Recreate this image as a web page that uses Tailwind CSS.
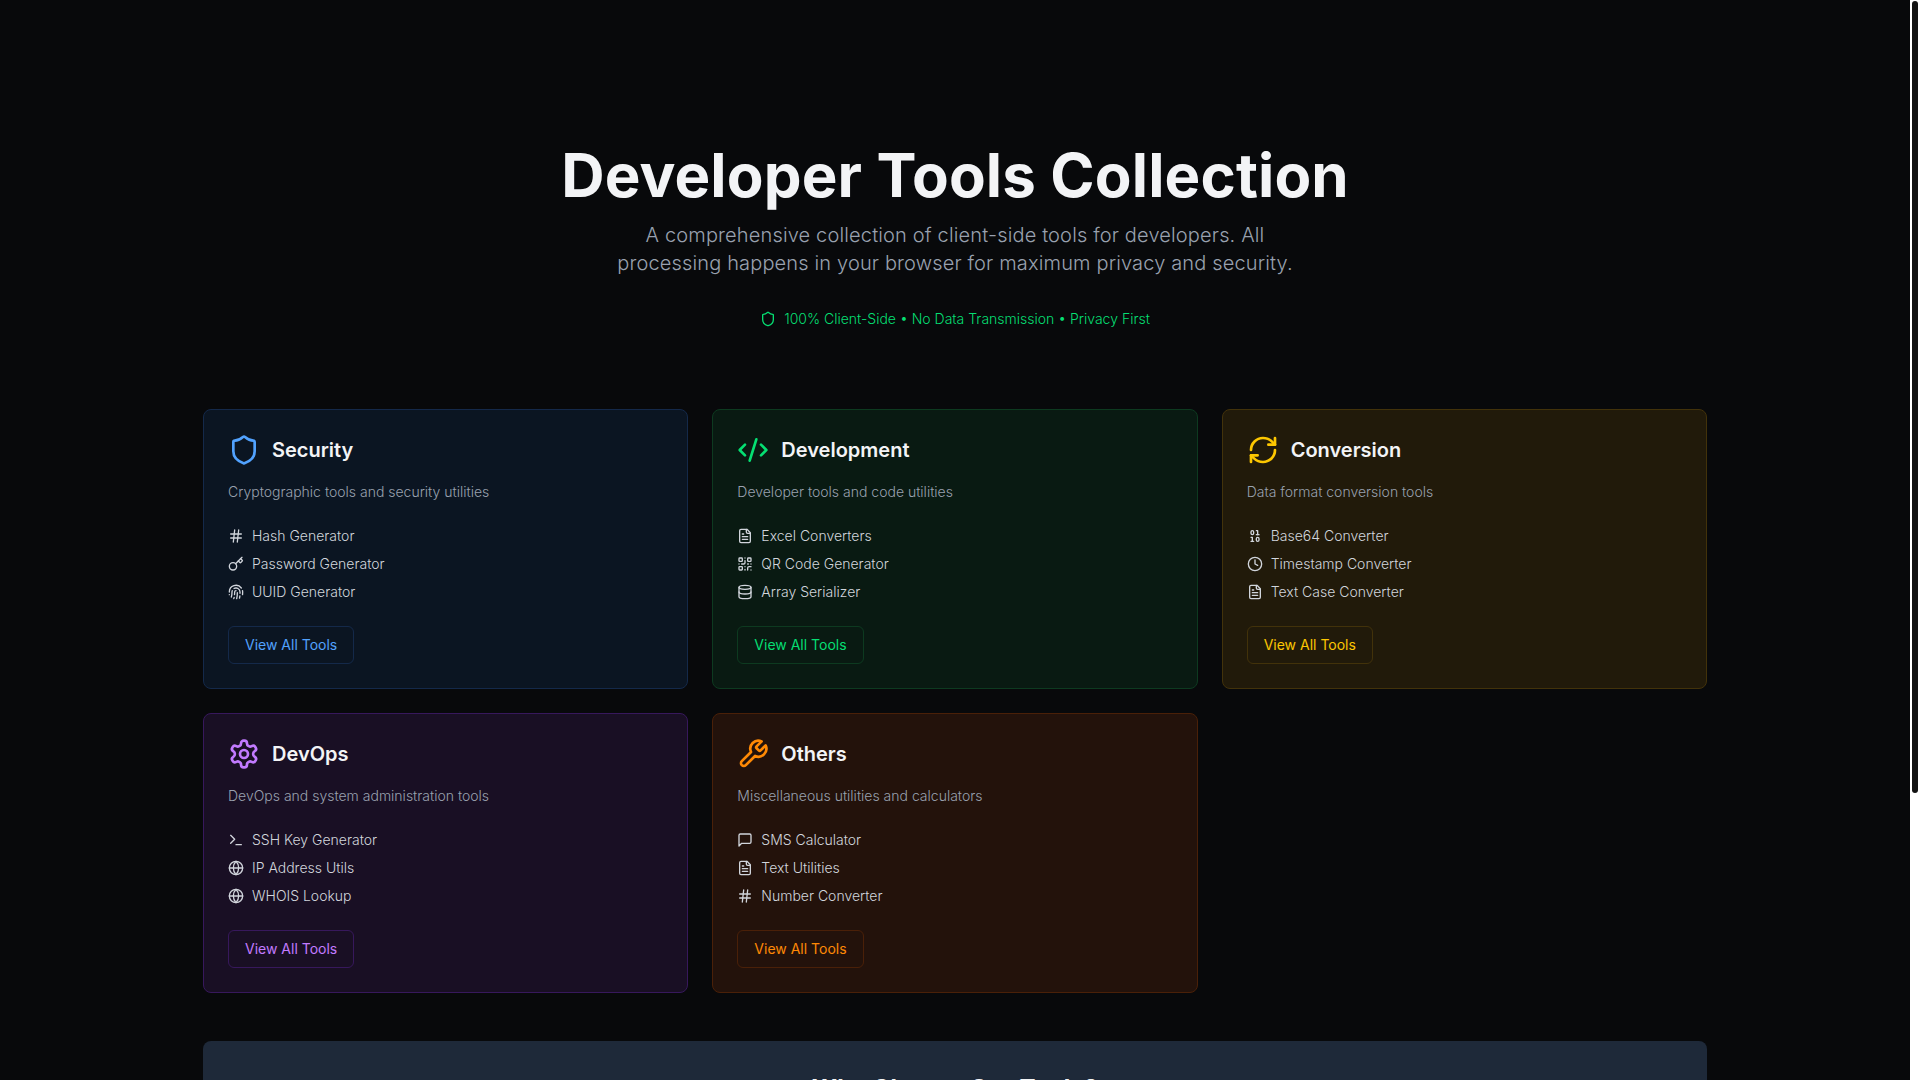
<!DOCTYPE html>
<html lang="en">
<head>
    <meta charset="UTF-8">
    <meta name="viewport" content="width=device-width, initial-scale=1.0">
    <title>Developer Tools Collection</title>
    <script src="https://cdn.jsdelivr.net/npm/@tailwindcss/browser@4"></script>
</head>
<body class="bg-[#08090b] font-['Inter',sans-serif] text-gray-100">
    <!-- Icon sprites -->
    <svg class="hidden" xmlns="http://www.w3.org/2000/svg">
        <symbol id="i-shield" viewBox="0 0 24 24"><path d="M20 13c0 5-3.5 7.5-7.66 8.95a1 1 0 0 1-.67-.01C7.5 20.5 4 18 4 13V6a1 1 0 0 1 1-1c2 0 4.5-1.2 6.24-2.72a1.17 1.17 0 0 1 1.52 0C14.51 3.81 17 5 19 5a1 1 0 0 1 1 1z"/></symbol>
        <symbol id="i-code" viewBox="0 0 24 24"><path d="m18 16 4-4-4-4"/><path d="m6 8-4 4 4 4"/><path d="m14.5 4-5 16"/></symbol>
        <symbol id="i-refresh" viewBox="0 0 24 24"><path d="M3 12a9 9 0 0 1 9-9 9.75 9.75 0 0 1 6.74 2.74L21 8"/><path d="M21 3v5h-5"/><path d="M21 12a9 9 0 0 1-9 9 9.75 9.75 0 0 1-6.74-2.74L3 16"/><path d="M8 16H3v5"/></symbol>
        <symbol id="i-settings" viewBox="0 0 24 24"><path d="M12.22 2h-.44a2 2 0 0 0-2 2v.18a2 2 0 0 1-1 1.73l-.43.25a2 2 0 0 1-2 0l-.15-.08a2 2 0 0 0-2.73.73l-.22.38a2 2 0 0 0 .73 2.73l.15.1a2 2 0 0 1 1 1.72v.51a2 2 0 0 1-1 1.74l-.15.09a2 2 0 0 0-.73 2.73l.22.38a2 2 0 0 0 2.73.73l.15-.08a2 2 0 0 1 2 0l.43.25a2 2 0 0 1 1 1.73V20a2 2 0 0 0 2 2h.44a2 2 0 0 0 2-2v-.18a2 2 0 0 1 1-1.73l.43-.25a2 2 0 0 1 2 0l.15.08a2 2 0 0 0 2.73-.73l.22-.39a2 2 0 0 0-.73-2.73l-.15-.08a2 2 0 0 1-1-1.74v-.5a2 2 0 0 1 1-1.74l.15-.09a2 2 0 0 0 .73-2.73l-.22-.38a2 2 0 0 0-2.73-.73l-.15.08a2 2 0 0 1-2 0l-.43-.25a2 2 0 0 1-1-1.73V4a2 2 0 0 0-2-2z"/><circle cx="12" cy="12" r="3"/></symbol>
        <symbol id="i-wrench" viewBox="0 0 24 24"><path d="M14.7 6.3a1 1 0 0 0 0 1.4l1.6 1.6a1 1 0 0 0 1.4 0l3.77-3.77a6 6 0 0 1-7.94 7.94l-6.91 6.91a2.12 2.12 0 0 1-3-3l6.91-6.91a6 6 0 0 1 7.94-7.94l-3.76 3.76z"/></symbol>
        <symbol id="i-hash" viewBox="0 0 24 24"><line x1="4" x2="20" y1="9" y2="9"/><line x1="4" x2="20" y1="15" y2="15"/><line x1="10" x2="8" y1="3" y2="21"/><line x1="16" x2="14" y1="3" y2="21"/></symbol>
        <symbol id="i-key" viewBox="0 0 24 24"><path d="m15.5 7.5 2.3 2.3a1 1 0 0 0 1.4 0l2.1-2.1a1 1 0 0 0 0-1.4L19 4"/><path d="m21 2-9.6 9.6"/><circle cx="7.5" cy="15.5" r="5.5"/></symbol>
        <symbol id="i-fingerprint" viewBox="0 0 24 24"><path d="M12 10a2 2 0 0 0-2 2c0 1.02-.1 2.51-.26 4"/><path d="M14 13.12c0 2.38 0 6.38-1 8.88"/><path d="M17.29 21.02c.12-.6.43-2.3.5-3.02"/><path d="M2 12a10 10 0 0 1 18-6"/><path d="M2 16h.01"/><path d="M21.8 16c.2-2 .131-5.354 0-6"/><path d="M5 19.5C5.5 18 6 15 6 12a6 6 0 0 1 .34-2"/><path d="M8.65 22c.21-.66.45-1.32.57-2"/><path d="M9 6.8a6 6 0 0 1 9 5.2v2"/></symbol>
        <symbol id="i-file" viewBox="0 0 24 24"><path d="M15 2H6a2 2 0 0 0-2 2v16a2 2 0 0 0 2 2h12a2 2 0 0 0 2-2V7Z"/><path d="M14 2v4a2 2 0 0 0 2 2h4"/><path d="M10 9H8"/><path d="M16 13H8"/><path d="M16 17H8"/></symbol>
        <symbol id="i-qr" viewBox="0 0 24 24"><rect width="5" height="5" x="3" y="3" rx="1"/><rect width="5" height="5" x="16" y="3" rx="1"/><rect width="5" height="5" x="3" y="16" rx="1"/><path d="M21 16h-3a2 2 0 0 0-2 2v3"/><path d="M21 21v.01"/><path d="M12 7v3a2 2 0 0 1-2 2H7"/><path d="M3 12h.01"/><path d="M12 3h.01"/><path d="M12 16v.01"/><path d="M16 12h1"/><path d="M21 12v.01"/><path d="M12 21v-1"/></symbol>
        <symbol id="i-database" viewBox="0 0 24 24"><ellipse cx="12" cy="5" rx="9" ry="3"/><path d="M3 5V19A9 3 0 0 0 21 19V5"/><path d="M3 12A9 3 0 0 0 21 12"/></symbol>
        <symbol id="i-binary" viewBox="0 0 24 24"><rect x="14" y="14" width="4" height="6" rx="2"/><rect x="6" y="4" width="4" height="6" rx="2"/><path d="M6 20h4"/><path d="M14 10h4"/><path d="M6 14h2v6"/><path d="M14 4h2v6"/></symbol>
        <symbol id="i-clock" viewBox="0 0 24 24"><circle cx="12" cy="12" r="10"/><polyline points="12 6 12 12 16 14"/></symbol>
        <symbol id="i-terminal" viewBox="0 0 24 24"><polyline points="4 17 10 11 4 5"/><line x1="12" x2="20" y1="19" y2="19"/></symbol>
        <symbol id="i-globe" viewBox="0 0 24 24"><circle cx="12" cy="12" r="10"/><path d="M12 2a14.5 14.5 0 0 0 0 20 14.5 14.5 0 0 0 0-20"/><path d="M2 12h20"/></symbol>
        <symbol id="i-message" viewBox="0 0 24 24"><path d="M21 15a2 2 0 0 1-2 2H7l-4 4V5a2 2 0 0 1 2-2h14a2 2 0 0 1 2 2z"/></symbol>
    </svg>

    <div class="flex h-[1080px] overflow-hidden">
        <main class="flex-1 min-w-0 overflow-hidden">
            <div class="max-w-[1536px] mx-auto px-4 pt-[145px]">

                <!-- Hero -->
                <header class="text-center mb-[80px]">
                    <h1 class="text-6xl font-bold tracking-[0.14px] text-gray-100">Developer Tools Collection</h1>
                    <p class="mt-4 max-w-[690px] mx-auto text-xl font-light tracking-[0.15px] text-gray-400">A comprehensive collection of client-side tools for developers. All processing happens in your browser for maximum privacy and security.</p>
                    <div class="mt-8 flex justify-center items-center gap-2 text-sm font-[330] text-green-400">
                        <svg class="w-4 h-4 fill-none stroke-current stroke-2 [stroke-linecap:round] [stroke-linejoin:round]"><use href="#i-shield"/></svg>
                        <span>100% Client-Side • No Data Transmission • Privacy First</span>
                    </div>
                </header>

                <!-- Categories -->
                <section class="grid grid-cols-3 gap-6 mb-12">
                    <!-- Security -->
                    <div class="rounded-lg border border-[#14294a] bg-[#0b1522] p-6">
                        <div class="flex items-center gap-3 mb-4">
                            <svg class="w-8 h-8 text-blue-400 fill-none stroke-current stroke-2 [stroke-linecap:round] [stroke-linejoin:round]"><use href="#i-shield"/></svg>
                            <h2 class="text-xl font-semibold text-gray-100">Security</h2>
                        </div>
                        <p class="text-sm font-[350] text-gray-400 mb-6">Cryptographic tools and security utilities</p>
                        <ul class="flex flex-col gap-2 text-sm font-[350] text-gray-300 mb-6">
                            <li class="flex items-center gap-2"><svg class="w-4 h-4 fill-none stroke-current stroke-2 [stroke-linecap:round] [stroke-linejoin:round]"><use href="#i-hash"/></svg>Hash Generator</li>
                            <li class="flex items-center gap-2"><svg class="w-4 h-4 fill-none stroke-current stroke-2 [stroke-linecap:round] [stroke-linejoin:round]"><use href="#i-key"/></svg>Password Generator</li>
                            <li class="flex items-center gap-2"><svg class="w-4 h-4 fill-none stroke-current stroke-2 [stroke-linecap:round] [stroke-linejoin:round]"><use href="#i-fingerprint"/></svg>UUID Generator</li>
                        </ul>
                        <button class="px-4 py-2 rounded-md border border-[#14294a] text-sm font-[370] text-blue-400">View All Tools</button>
                    </div>

                    <!-- Development -->
                    <div class="rounded-lg border border-[#0d3a20] bg-[#091a12] p-6">
                        <div class="flex items-center gap-3 mb-4">
                            <svg class="w-8 h-8 text-green-400 fill-none stroke-current stroke-2 [stroke-linecap:round] [stroke-linejoin:round]"><use href="#i-code"/></svg>
                            <h2 class="text-xl font-semibold text-gray-100">Development</h2>
                        </div>
                        <p class="text-sm font-[350] text-gray-400 mb-6">Developer tools and code utilities</p>
                        <ul class="flex flex-col gap-2 text-sm font-[350] text-gray-300 mb-6">
                            <li class="flex items-center gap-2"><svg class="w-4 h-4 fill-none stroke-current stroke-2 [stroke-linecap:round] [stroke-linejoin:round]"><use href="#i-file"/></svg>Excel Converters</li>
                            <li class="flex items-center gap-2"><svg class="w-4 h-4 fill-none stroke-current stroke-2 [stroke-linecap:round] [stroke-linejoin:round]"><use href="#i-qr"/></svg>QR Code Generator</li>
                            <li class="flex items-center gap-2"><svg class="w-4 h-4 fill-none stroke-current stroke-2 [stroke-linecap:round] [stroke-linejoin:round]"><use href="#i-database"/></svg>Array Serializer</li>
                        </ul>
                        <button class="px-4 py-2 rounded-md border border-[#0d3a20] text-sm font-[370] text-green-400">View All Tools</button>
                    </div>

                    <!-- Conversion -->
                    <div class="rounded-lg border border-[#42320a] bg-[#211a0a] p-6">
                        <div class="flex items-center gap-3 mb-4">
                            <svg class="w-8 h-8 text-yellow-400 fill-none stroke-current stroke-2 [stroke-linecap:round] [stroke-linejoin:round]"><use href="#i-refresh"/></svg>
                            <h2 class="text-xl font-semibold text-gray-100">Conversion</h2>
                        </div>
                        <p class="text-sm font-[350] text-gray-400 mb-6">Data format conversion tools</p>
                        <ul class="flex flex-col gap-2 text-sm font-[350] text-gray-300 mb-6">
                            <li class="flex items-center gap-2"><svg class="w-4 h-4 fill-none stroke-current stroke-2 [stroke-linecap:round] [stroke-linejoin:round]"><use href="#i-binary"/></svg>Base64 Converter</li>
                            <li class="flex items-center gap-2"><svg class="w-4 h-4 fill-none stroke-current stroke-2 [stroke-linecap:round] [stroke-linejoin:round]"><use href="#i-clock"/></svg>Timestamp Converter</li>
                            <li class="flex items-center gap-2"><svg class="w-4 h-4 fill-none stroke-current stroke-2 [stroke-linecap:round] [stroke-linejoin:round]"><use href="#i-file"/></svg>Text Case Converter</li>
                        </ul>
                        <button class="px-4 py-2 rounded-md border border-[#42320a] text-sm font-[370] text-yellow-400">View All Tools</button>
                    </div>

                    <!-- DevOps -->
                    <div class="rounded-lg border border-[#37185c] bg-[#190f24] p-6">
                        <div class="flex items-center gap-3 mb-4">
                            <svg class="w-8 h-8 text-purple-400 fill-none stroke-current stroke-2 [stroke-linecap:round] [stroke-linejoin:round]"><use href="#i-settings"/></svg>
                            <h2 class="text-xl font-semibold text-gray-100">DevOps</h2>
                        </div>
                        <p class="text-sm font-[350] text-gray-400 mb-6">DevOps and system administration tools</p>
                        <ul class="flex flex-col gap-2 text-sm font-[350] text-gray-300 mb-6">
                            <li class="flex items-center gap-2"><svg class="w-4 h-4 fill-none stroke-current stroke-2 [stroke-linecap:round] [stroke-linejoin:round]"><use href="#i-terminal"/></svg>SSH Key Generator</li>
                            <li class="flex items-center gap-2"><svg class="w-4 h-4 fill-none stroke-current stroke-2 [stroke-linecap:round] [stroke-linejoin:round]"><use href="#i-globe"/></svg>IP Address Utils</li>
                            <li class="flex items-center gap-2"><svg class="w-4 h-4 fill-none stroke-current stroke-2 [stroke-linecap:round] [stroke-linejoin:round]"><use href="#i-globe"/></svg>WHOIS Lookup</li>
                        </ul>
                        <button class="px-4 py-2 rounded-md border border-[#37185c] text-sm font-[370] text-purple-400">View All Tools</button>
                    </div>

                    <!-- Others -->
                    <div class="rounded-lg border border-[#4a2008] bg-[#23120b] p-6">
                        <div class="flex items-center gap-3 mb-4">
                            <svg class="w-8 h-8 text-orange-400 fill-none stroke-current stroke-2 [stroke-linecap:round] [stroke-linejoin:round]"><use href="#i-wrench"/></svg>
                            <h2 class="text-xl font-semibold text-gray-100">Others</h2>
                        </div>
                        <p class="text-sm font-[350] text-gray-400 mb-6">Miscellaneous utilities and calculators</p>
                        <ul class="flex flex-col gap-2 text-sm font-[350] text-gray-300 mb-6">
                            <li class="flex items-center gap-2"><svg class="w-4 h-4 fill-none stroke-current stroke-2 [stroke-linecap:round] [stroke-linejoin:round]"><use href="#i-message"/></svg>SMS Calculator</li>
                            <li class="flex items-center gap-2"><svg class="w-4 h-4 fill-none stroke-current stroke-2 [stroke-linecap:round] [stroke-linejoin:round]"><use href="#i-file"/></svg>Text Utilities</li>
                            <li class="flex items-center gap-2"><svg class="w-4 h-4 fill-none stroke-current stroke-2 [stroke-linecap:round] [stroke-linejoin:round]"><use href="#i-hash"/></svg>Number Converter</li>
                        </ul>
                        <button class="px-4 py-2 rounded-md border border-[#4a2008] text-sm font-[370] text-orange-400">View All Tools</button>
                    </div>
                </section>

                <!-- Why choose -->
                <section class="rounded-lg bg-gray-800 p-8 text-center">
                    <h2 class="text-2xl font-bold tracking-[0.23px] text-gray-100">Why Choose Our Tools?</h2>
                </section>
            </div>
        </main>

        <!-- Scrollbar -->
        <aside class="w-[10px] shrink-0 bg-white pt-px px-[2px]">
            <div class="h-[792px] rounded-[3px] bg-[#121212]"></div>
        </aside>
    </div>
</body>
</html>
